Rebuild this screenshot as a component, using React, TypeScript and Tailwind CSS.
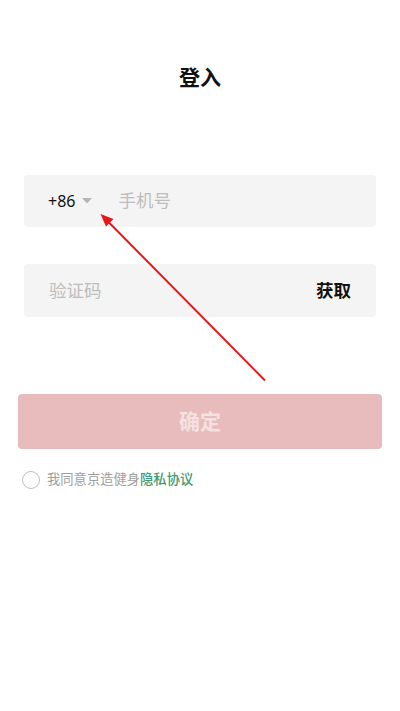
import React from "react";

export default function App() {
  const font = { fontFamily: '"Noto Sans", "Noto Sans CJK SC", sans-serif' };
  return (
    <div className="relative w-[400px] h-[711px] bg-white overflow-hidden" style={font}>
      <div className="flex flex-col">
        <div className="h-[30px] mt-[62px] flex items-center justify-center text-[21px] font-bold text-[#111] leading-none">
          登入
        </div>
        <div className="mt-[83px] mx-[24px] h-[52px] rounded-[4px] bg-[#f4f4f4] flex items-center pl-[24px]">
          <span className="text-[16px] text-[#111] leading-none">+86</span>
          <svg className="ml-[7px]" width="10" height="6" viewBox="0 0 10 6">
            <path d="M0 0 L10 0 L5 5.5 Z" fill="#b5b5b5" />
          </svg>
          <span className="ml-[26px] text-[17.5px] text-[#bdbdbd] leading-none">手机号</span>
        </div>
        <div className="mt-[37px] mx-[24px] h-[53px] rounded-[4px] bg-[#f4f4f4] flex items-center justify-between pl-[25px] pr-[25px]">
          <span className="text-[17.5px] text-[#bdbdbd] leading-none">验证码</span>
          <span className="text-[17.5px] font-bold text-[#111] leading-none">获取</span>
        </div>
        <div className="mt-[77px] mx-[18px] h-[55px] rounded-[4px] bg-[#e8bcbd] flex items-center justify-center">
          <span className="text-[21px] font-bold text-[#f5e1e1] leading-none">确定</span>
        </div>
        <div className="mt-[22px] ml-[22px] flex items-center">
          <div className="w-[18px] h-[18px] rounded-full border border-[#bdbdbd]"></div>
          <span className="ml-[7px] text-[13.3px] text-[#9e9e9e] leading-none">我同意京造健身</span>
          <span className="text-[13.3px] font-medium text-[#3e9a70] leading-none">隐私协议</span>
        </div>
      </div>
      <svg className="absolute left-0 top-0 pointer-events-none" width="400" height="711" viewBox="0 0 400 711">
        <line x1="265" y1="380.5" x2="108" y2="221.5" stroke="#e8161b" strokeWidth="2" />
        <path d="M100.5 214 L113.5 219 L106 226.5 Z" fill="#e8161b" />
      </svg>
    </div>
  );
}
